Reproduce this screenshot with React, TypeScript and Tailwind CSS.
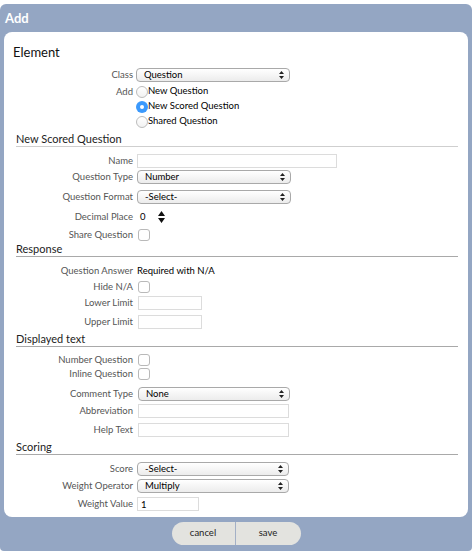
import clsx from 'clsx';
import type { ReactNode } from 'react';

const font = { fontFamily: 'Lato, "Open Sans", sans-serif' };

function Row({ label, className, children }: { label: string; className?: string; children?: ReactNode }) {
  return (
    <div className={clsx('flex items-center h-[14px]', className)}>
      <div className="w-[117px] shrink-0 text-right text-[9.5px] leading-[14px] text-[#555]">{label}</div>
      <div className="ml-[4px] flex items-center">{children}</div>
    </div>
  );
}

function Arrows() {
  return (
    <svg width="5" height="8" viewBox="0 0 5 8" className="shrink-0">
      <path d="M2.5 0 L5 3 L0 3 Z M0 5 L5 5 L2.5 8 Z" fill="#222" />
    </svg>
  );
}

function Select({ value, className }: { value: string; className: string }) {
  return (
    <div
      className={clsx(
        'flex items-center justify-between h-[14px] rounded-[4px] border border-[#a9a9a9] bg-gradient-to-b from-white to-[#ececec] pl-[7px] pr-[5px] text-[9.5px] leading-none text-black',
        className,
      )}
    >
      <span>{value}</span>
      <Arrows />
    </div>
  );
}

function TextInput({ className, value }: { className: string; value?: string }) {
  return (
    <div className={clsx('h-[14px] border border-[#dcdcdc] bg-white text-[9.5px] leading-[13px] text-black pl-[3px]', className)}>
      {value}
    </div>
  );
}

function Checkbox() {
  return <div className="ml-[1px] w-[12px] h-[12px] rounded-[3px] border border-[#b9b9b9] bg-white" />;
}

function Radio({ checked }: { checked?: boolean }) {
  return checked ? (
    <div className="w-[12px] h-[12px] rounded-full bg-[#3b99fc] flex items-center justify-center">
      <div className="w-[4px] h-[4px] rounded-full bg-white" />
    </div>
  ) : (
    <div className="w-[12px] h-[12px] rounded-full border border-[#bdbdbd] bg-gradient-to-b from-white to-[#f2f2f2]" />
  );
}

function Heading({ title, className }: { title: string; className?: string }) {
  return (
    <div className={clsx('text-[11px] leading-[13px] text-[#222] pb-[1px] border-b', className)}>{title}</div>
  );
}

export default function App() {
  return (
    <div className="w-[472px] h-[556px] bg-white pt-[4px]" style={font}>
      <div className="h-[547px] bg-[#94a6c3] rounded-t-[6px] rounded-b-[4px] flex flex-col">
        <div className="h-[28px] pl-[5px] pt-[7px] text-[13px] leading-[14px] font-bold text-white">Add</div>
        <div className="mx-[4px] h-[485px] bg-white rounded-[8px] pl-[9px] pr-[10px]">
          <div className="mt-[11px] h-[20px] flex items-center text-[13px] text-[#111]">Element</div>
          <div className="pl-[3px]">
            <Row label="Class" className="mt-[4px] h-[16px]">
              <Select value="Question" className="w-[154px] -ml-[1px]" />
            </Row>
            <Row label="Add" className="mt-[1px] h-[15px]">
              <div className="-ml-[1px] flex items-center text-[9.5px] text-black">
                <Radio />
                <span>New Question</span>
              </div>
            </Row>
            <Row label="" className="h-[15px]">
              <div className="-ml-[1px] flex items-center text-[9.5px] text-black">
                <Radio checked />
                <span>New Scored Question</span>
              </div>
            </Row>
            <Row label="" className="h-[15px]">
              <div className="-ml-[1px] flex items-center text-[9.5px] text-black">
                <Radio />
                <span>Shared Question</span>
              </div>
            </Row>

            <Heading title="New Scored Question" className="mt-[3px] border-[#cfcfcf]" />
            <Row label="Name" className="mt-[6px] h-[16px]">
              <TextInput className="w-[200px]" />
            </Row>
            <Row label="Question Type" className="h-[16px]">
              <Select value="Number" className="w-[154px]" />
            </Row>
            <Row label="Question Format" className="mt-[4px] h-[16px]">
              <Select value="-Select-" className="w-[154px]" />
            </Row>
            <Row label="Decimal Place" className="mt-[4px] h-[16px]">
              <div className="flex items-center text-[9.5px] text-black">
                <span className="ml-[3px] w-[18px]">0</span>
                <svg width="7" height="12" viewBox="0 0 7 12">
                  <path d="M3.5 0 L7 5 L0 5 Z M0 7 L7 7 L3.5 12 Z" fill="#111" />
                </svg>
              </div>
            </Row>
            <Row label="Share Question" className="mt-[3px]">
              <Checkbox />
            </Row>

            <Heading title="Response" className="border-[#a9a9a9]" />
            <Row label="Question Answer" className="mt-[7px]">
              <span className="text-[9.5px] text-black">Required with N/A</span>
            </Row>
            <Row label="Hide N/A" className="mt-[2px]">
              <Checkbox />
            </Row>
            <Row label="Lower Limit" className="mt-[2px]">
              <TextInput className="w-[64px] ml-[1px]" />
            </Row>
            <Row label="Upper Limit" className="mt-[5px]">
              <TextInput className="w-[64px] ml-[1px]" />
            </Row>

            <Heading title="Displayed text" className="mt-[3px] border-[#a9a9a9]" />
            <Row label="Number Question" className="mt-[6px]">
              <Checkbox />
            </Row>
            <Row label="Inline Question">
              <Checkbox />
            </Row>
            <Row label="Comment Type" className="mt-[6px]">
              <Select value="None" className="w-[152px] ml-[1px]" />
            </Row>
            <Row label="Abbreviation" className="mt-[3px]">
              <TextInput className="w-[151px] ml-[1px]" />
            </Row>
            <Row label="Help Text" className="mt-[5px]">
              <TextInput className="w-[151px] ml-[1px]" />
            </Row>

            <Heading title="Scoring" className="mt-[3px] border-[#a9a9a9]" />
            <Row label="Score" className="mt-[7px]">
              <Select value="-Select-" className="w-[152px]" />
            </Row>
            <Row label="Weight Operator" className="mt-[3px]">
              <Select value="Multiply" className="w-[152px]" />
            </Row>
            <Row label="Weight Value" className="mt-[4px]">
              <TextInput className="w-[62px]" value="1" />
            </Row>
          </div>
        </div>
        <div className="mt-[5px] flex justify-center">
          <div className="flex h-[23px] rounded-full overflow-hidden bg-[#e3e3df] text-[9.5px] text-[#222]">
            <div className="w-[64px] flex items-center justify-center border-r border-[#a3b0c6]">cancel</div>
            <div className="w-[65px] flex items-center justify-center">save</div>
          </div>
        </div>
      </div>
    </div>
  );
}
